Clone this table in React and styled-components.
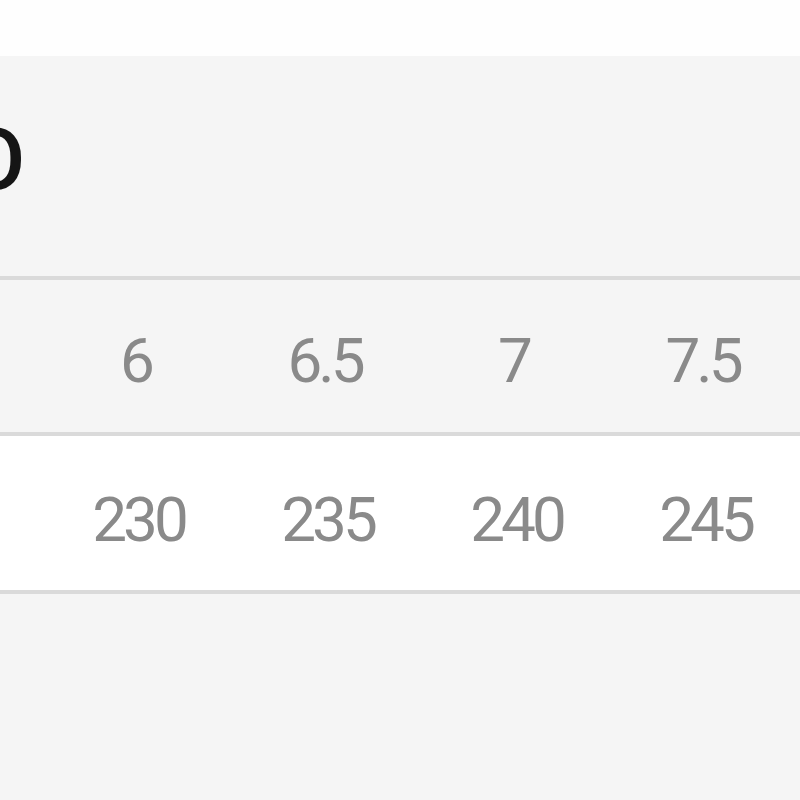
import React from 'react'
import styled, { createGlobalStyle } from "styled-components"

const sizes = [
    { us: "6", mm: "230" },
    { us: "6.5", mm: "235" },
    { us: "7", mm: "240" },
    { us: "7.5", mm: "245" },
]

const App = () => {
    return (
        <>
            <GlobalStyle />
            <Page>
                <TopBar />
                <TitleBar>
                    <Title>O</Title>
                </TitleBar>
                <Table>
                    <Row head>
                        <Cell />
                        {sizes.map(({ us }) => (
                            <Cell key={us} head>{us}</Cell>
                        ))}
                    </Row>
                    <Row>
                        <Cell />
                        {sizes.map(({ mm }) => (
                            <Cell key={mm}>{mm}</Cell>
                        ))}
                    </Row>
                </Table>
            </Page>
        </>
    )
}

export default App

const GlobalStyle = createGlobalStyle`
    html, body {
        margin: 0;
        padding: 0;
        background: #f5f5f5;
    }
`
const Page = styled.div`
    width: 800px;
    height: 800px;
    overflow: hidden;
    font-family: Roboto, "Liberation Sans", sans-serif;
    background: #f5f5f5;
`
const TopBar = styled.div`
    height: 56px;
    background: #fefefe;
`
const TitleBar = styled.div`
    height: 220px;
    display: flex;
    align-items: center;
    padding-bottom: 12px;
    box-sizing: border-box;
`
const Title = styled.div`
    font-size: 86px;
    font-weight: 500;
    line-height: 1;
    color: #151515;
    margin-left: -34px;
`
const Table = styled.div`
    border-top: 4px solid #dadada;
`
const Row = styled.div`
    display: grid;
    grid-template-columns: 47px repeat(4, 189px);
    height: ${p => (p.head ? 152 : 154)}px;
    background: ${p => (p.head ? "#f5f5f5" : "#ffffff")};
    border-bottom: 4px solid #dadada;
`
const Cell = styled.div`
    display: flex;
    align-items: center;
    justify-content: center;
    font-size: 62px;
    letter-spacing: -4px;
    color: #8a8a8a;
    padding-top: ${p => (p.head ? 8 : 12)}px;
    margin-left: ${p => (p.head ? -12 : -6)}px;
`
